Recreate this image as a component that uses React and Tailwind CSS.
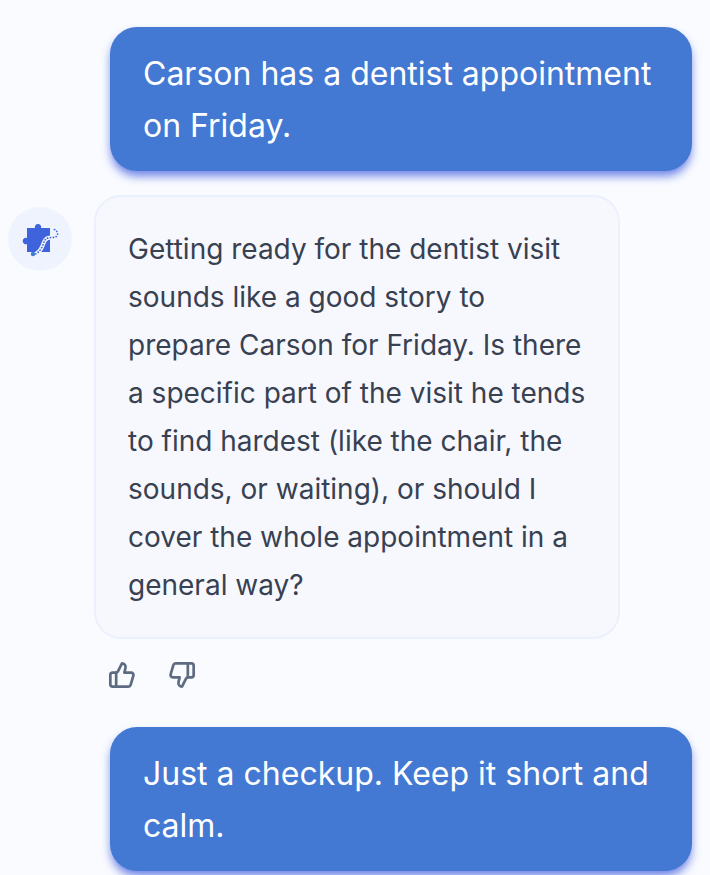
import { ThumbsUp, ThumbsDown } from "lucide-react";

function UserBubble({ children, className = "" }) {
  return (
    <div className={`flex justify-end pr-[18px] ${className}`}>
      <div className="w-[582px] rounded-[27px] bg-[#4379d2] px-[33px] pt-[21px] pb-[19px] text-[32px] leading-[52px] text-white shadow-[0_6px_10px_-1px_rgba(62,90,221,0.75)]">
        {children}
      </div>
    </div>
  );
}

const trail = "M13 36C17 35 20 32 22 28C24 24 24 20 28 19C31 18 35 19 37 17C39 14 36 10 32 10";

function PuzzleIcon() {
  return (
    <svg width="40" height="40" viewBox="0 0 40 40" fill="none">
      <path d="M7 9H14.900a3.200 3.200 0 1 1 6.200 0H30V33H7V25a3.200 3.200 0 1 1 0-6z" fill="#3e63dd" />
      <path d={trail} stroke="#f1f5fe" strokeWidth="4" />
      <path d={trail} stroke="#3e63dd" strokeWidth="1.700" strokeLinecap="round" strokeDasharray="0.1 2.800" />
      <circle cx="13" cy="35" r="2.200" fill="#3e7fc9" />
    </svg>
  );
}

export default function App() {
  return (
    <div className="h-[875px] w-[710px] overflow-hidden bg-[#f9fbff] pt-[27px] font-['Inter',sans-serif]">
      <UserBubble>Carson has a dentist appointment on Friday.</UserBubble>

      <div className="mt-[24px] flex items-start">
        <div className="mt-[12px] ml-2 flex h-16 w-16 shrink-0 items-center justify-center rounded-full bg-[#eff3fe]">
          <PuzzleIcon />
        </div>
        <div className="ml-[22px]">
          <div className="w-[526px] rounded-[27px] border-2 border-[#ebf0fd] bg-[#f7f8fe] px-[32px] pt-[28px] pb-[28px] text-[28px] leading-[48px] text-[#374151]">
            Getting ready for the dentist visit sounds like a good story to prepare Carson for Friday. Is there a specific part of the visit he tends to find hardest (like the chair, the sounds, or waiting), or should I cover the whole appointment in a general way?
          </div>
          <div className="mt-[22px] ml-[13.500px] flex gap-[32px] text-[#5d6b82]">
            <ThumbsUp size={28} strokeWidth={2.300} />
            <ThumbsDown size={28} strokeWidth={2.300} />
          </div>
        </div>
      </div>

      <UserBubble className="mt-[38px]">Just a checkup. Keep it short and calm.</UserBubble>
    </div>
  );
}
